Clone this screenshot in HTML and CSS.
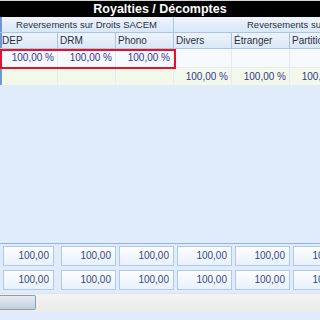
FILE: index.html
```html
<!DOCTYPE html>
<html lang="fr">
<head>
    <meta charset="UTF-8">
    <title>Royalties / Décomptes</title>
    <link rel="stylesheet" href="styles.css">
</head>
<body>
    <div class="window">
        <div class="title">Royalties / Décomptes</div>

        <div class="grid-wrap">
            <div class="grid">
                <div class="band band-sacem c1">Reversements sur Droits SACEM</div>
                <div class="band band-other">Reversements sur Droits Étrangers et Divers</div>

                <div class="col c1">DEP</div>
                <div class="col">DRM</div>
                <div class="col">Phono</div>
                <div class="col">Divers</div>
                <div class="col">Étranger</div>
                <div class="col">Partitions</div>
                <div class="col">Synchro</div>
                <div class="col">Copie privée</div>
                <div class="col">Autres</div>

                <div class="cell row-a c1">100,00 %</div>
                <div class="cell row-a">100,00 %</div>
                <div class="cell row-a">100,00 %</div>
                <div class="cell row-a"></div>
                <div class="cell row-a"></div>
                <div class="cell row-a"></div>
                <div class="cell row-a"></div>
                <div class="cell row-a"></div>
                <div class="cell row-a"></div>

                <div class="cell row-b c1"></div>
                <div class="cell row-b"></div>
                <div class="cell row-b"></div>
                <div class="cell row-b">100,00 %</div>
                <div class="cell row-b">100,00 %</div>
                <div class="cell row-b">100,00 %</div>
                <div class="cell row-b">100,00 %</div>
                <div class="cell row-b">100,00 %</div>
                <div class="cell row-b">100,00 %</div>
            </div>
            <div class="selection"></div>
        </div>

        <div class="blank"></div>

        <div class="totals">
            <div class="box-row">
                <div class="box">100,00</div>
                <div class="box">100,00</div>
                <div class="box">100,00</div>
                <div class="box">100,00</div>
                <div class="box">100,00</div>
                <div class="box">100,00</div>
            </div>
            <div class="box-row">
                <div class="box">100,00</div>
                <div class="box">100,00</div>
                <div class="box">100,00</div>
                <div class="box">100,00</div>
                <div class="box">100,00</div>
                <div class="box">100,00</div>
            </div>
        </div>

        <div class="scrollbar">
            <div class="thumb"></div>
        </div>
    </div>
</body>
</html>
```

FILE: styles.css
```css
body {
    margin: 0;
    background-color: #e0ecfc;
    font-family: 'Liberation Sans', Arial, sans-serif;
    font-size: 10px;
    overflow: hidden;
}

.window {
    width: 320px;
    height: 320px;
    display: flex;
    flex-direction: column;
    overflow: hidden;
}

.title {
    height: 16px;
    line-height: 16px;
    border-top: 1px solid #d6d6d6;
    background-color: #000;
    color: #fff;
    font-weight: bold;
    font-size: 12.5px;
    text-align: center;
    flex: none;
}

.grid-wrap {
    position: relative;
    height: 69px;
    overflow: hidden;
    flex: none;
}

.grid {
    display: grid;
    grid-template-columns: repeat(9, 58px);
    grid-template-rows: 16px 16px 19px 18px;
    width: 522px;
}

.band,
.col {
    box-sizing: border-box;
    background: linear-gradient(#eef4fd, #d9e7f8);
    border-right: 1px solid #aac3e6;
    border-bottom: 1px solid #aac3e6;
    color: #2a2f3a;
    line-height: 15px;
    white-space: nowrap;
    overflow: hidden;
}

.band-sacem {
    grid-column: 1 / 4;
    text-align: center;
    font-size: 9.5px;
}

.band-other {
    grid-column: 4 / 10;
    padding-left: 73px;
    font-size: 9.5px;
}

.col {
    padding-left: 2px;
    font-size: 10px;
}

.cell {
    box-sizing: border-box;
    border-right: 1px solid #e3ebf3;
    border-bottom: 1px solid #e3ebf3;
    text-align: right;
    padding-right: 3px;
    color: #35358f;
    white-space: nowrap;
}

.row-a {
    background-color: #f6f9fe;
    line-height: 18px;
}

.row-b {
    background-color: #f3f9ea;
    line-height: 17px;
}

.c1 {
    box-shadow: inset 2px 0 #6e98d8;
}

.selection {
    position: absolute;
    left: 0;
    top: 32px;
    width: 176px;
    height: 20px;
    box-sizing: border-box;
    border: 2px solid #e2142a;
}

.blank {
    flex: 1;
}

.totals {
    flex: none;
    border-top: 1px solid #8fb3e8;
    padding-top: 2px;
    display: flex;
    flex-direction: column;
    gap: 4px;
}

.box-row {
    display: flex;
    gap: 3px;
    padding-left: 3px;
}

.box {
    flex: none;
    box-sizing: border-box;
    width: 55px;
    height: 20px;
    line-height: 18px;
    border: 1px solid #aec8ee;
    background: linear-gradient(#fdfeff, #e9f1fc);
    color: #34478a;
    text-align: right;
    padding-right: 4px;
}

.box:first-child {
    width: 51px;
    margin-right: 4px;
}

.scrollbar {
    flex: none;
    height: 19px;
    margin-top: 3px;
    margin-bottom: 8px;
    background: linear-gradient(#f4f4f4, #ebebeb);
    border-top: 1px solid #e2e2e2;
    box-sizing: border-box;
    padding-top: 1px;
}

.thumb {
    width: 36px;
    height: 15px;
    box-sizing: border-box;
    border: 1px solid #8c9db3;
    border-left: none;
    border-radius: 0 2px 2px 0;
    background: linear-gradient(#e7ecf2, #c2cedc);
}
```
